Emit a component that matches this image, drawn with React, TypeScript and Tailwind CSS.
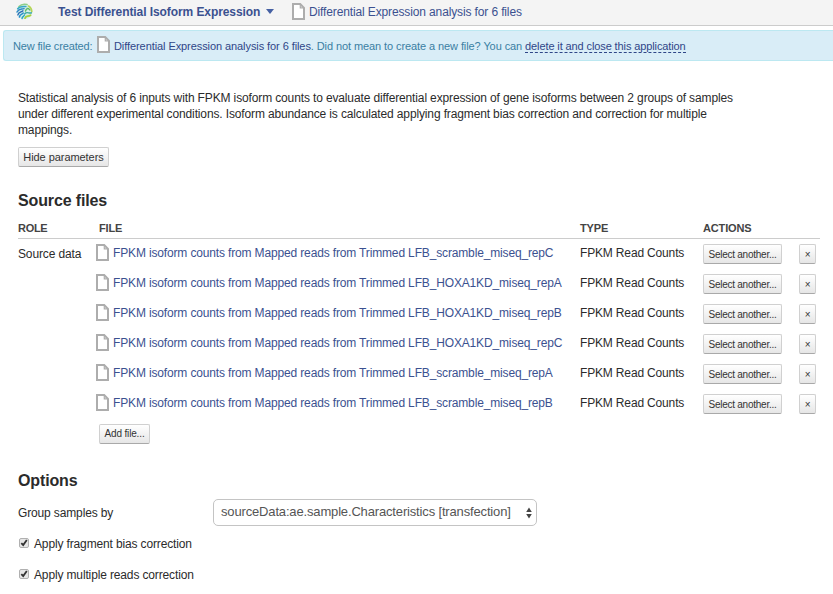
import React from 'react';

const files = [
  'LFB_scramble_miseq_repC',
  'LFB_HOXA1KD_miseq_repA',
  'LFB_HOXA1KD_miseq_repB',
  'LFB_HOXA1KD_miseq_repC',
  'LFB_scramble_miseq_repA',
  'LFB_scramble_miseq_repB',
];

function FileIcon() {
  return (
    <svg width="13" height="17" viewBox="0 0 13 17" className="block shrink-0">
      <path d="M1 1H8.2L12 4.8V16H1Z" fill="#fff" stroke="#adadad" strokeWidth="2" />
      <path d="M8.3 1V4.8H12" fill="none" stroke="#adadad" strokeWidth="1.2" />
    </svg>
  );
}

function Logo() {
  return (
    <svg width="17" height="17" viewBox="0 0 17 17" className="block shrink-0">
      <circle cx="8.5" cy="8.5" r="7.8" fill="#d5eee9" />
      <g fill="none" strokeLinecap="round">
        <path d="M3 3.6C5 1.4 8 .8 11 1.6" stroke="#8fcf8a" strokeWidth="1.6" />
        <path d="M1.6 5.8C4 3 7 3.4 10 3.6" stroke="#35a9c4" strokeWidth="1.4" />
        <path d="M1 9C3 5.5 5 6.5 8 5.6" stroke="#2d86c8" strokeWidth="1.5" />
        <path d="M1.8 12C3 8.5 5 9.5 7 7.8" stroke="#2769b5" strokeWidth="1.3" />
        <path d="M3.4 14C4 11 5.5 12 7.2 10" stroke="#258ecb" strokeWidth="1.6" />
        <path d="M6 15.6C6.2 13.5 7.5 14 8.4 12" stroke="#2aa5bb" strokeWidth="1.4" />
        <path d="M12.5 3C14.5 4 15.6 6 15.8 8.5" stroke="#b6d552" strokeWidth="1.6" />
        <path d="M9.5 8C10.5 4.8 12.5 4.8 13.8 7" stroke="#5dbb63" strokeWidth="1.4" />
        <path d="M8.8 10.8C11 8 13 11 15.5 9.8" stroke="#3aa99f" strokeWidth="1.4" />
        <path d="M9 15.2C10 12 12 14 14.6 12.2" stroke="#a6cf3f" strokeWidth="1.8" />
      </g>
    </svg>
  );
}

function Button({ children, className }: { children: React.ReactNode; className: string }) {
  return (
    <button
      className={`block h-5 shrink-0 whitespace-nowrap rounded-[2px] border border-[#d0d0d0] border-b-[#a9a9a9] bg-gradient-to-b from-white to-[#e6e6e6] text-center text-[#333] ${className}`}
    >
      {children}
    </button>
  );
}

function Check({ label }: { label: string }) {
  return (
    <label className="flex h-[31px] items-center">
      <svg width="10" height="10" viewBox="0 0 10 10" className="mr-[5px] mb-[2px] ml-[1px] block shrink-0">
        <rect x=".5" y=".5" width="9" height="9" rx="1.5" fill="#e6e6e6" stroke="#b0b0b0" />
        <path d="M2.3 5.1L4.2 7L7.8 2" fill="none" stroke="#333" strokeWidth="1.8" />
      </svg>
      <span>{label}</span>
    </label>
  );
}

export default function App() {
  return (
    <div className="h-[594px] w-[833px] overflow-hidden bg-white font-['Liberation_Sans',Arial,sans-serif] text-[12px] leading-4 tracking-[-0.14px] text-[#2b2b2b]">
      <header className="flex h-[26px] items-center border-b border-[#ccc] bg-[#f4f4f4] pb-[2px] pl-4 text-[#3b5190]">
        <Logo />
        <span className="ml-[25px] w-[202px] whitespace-nowrap font-bold tracking-[-0.08px]">Test Differential Isoform Expression</span>
        <span className="ml-[6px] border-x-4 border-t-[5px] border-x-transparent border-t-[#4560a3]" />
        <span className="-mt-px ml-[18px]"><FileIcon /></span>
        <span className="ml-[4px] whitespace-nowrap tracking-[-0.13px]">Differential Expression analysis for 6 files</span>
      </header>

      <div className="mt-1 ml-[3px] flex h-[31px] items-center rounded-l-[3px] border border-r-0 border-[#bce8f1] bg-[#d9edf7] pl-[9px] text-[11px] tracking-[-0.08px] whitespace-nowrap text-[#3a7fa3]">
        <span className="w-[80px] tracking-[-0.15px]">New file created:</span>
        <span className="-mt-[3px] mr-[4px] ml-[4px]"><FileIcon /></span>
        <span className="text-[#2f4688]">Differential Expression analysis for 6 files</span>
        <span className="whitespace-pre tracking-[-0.09px]">. Did not mean to create a new file? You can </span>
        <span className="mt-px border-b border-dashed border-[#2f4688] leading-[12px] tracking-[-0.11px] text-[#2f4688]">delete it and close this application</span>
      </div>

      <main className="pt-[29px] pr-[13px] pl-[18px]">
        <p className="whitespace-nowrap tracking-[-0.135px]">
          Statistical analysis of 6 inputs with FPKM isoform counts to evaluate differential expression of gene isoforms between 2 groups of samples<br />
          under different experimental conditions. Isoform abundance is calculated applying fragment bias correction and correction for multiple<br />
          mappings.
        </p>
        <Button className="mt-[9px] w-[91px] text-[11px] leading-[18px] tracking-[-0.06px]">Hide parameters</Button>

        <h2 className="mt-6 h-5 text-[16px] leading-5 font-bold">Source files</h2>
        <div className="mt-2 flex h-5 border-b border-[#ccc] text-[11px] leading-[18px] font-bold text-[#444]">
          <span className="w-[81px] tracking-[-0.3px]">ROLE</span>
          <span className="w-[481px]">FILE</span>
          <span className="w-[123px] tracking-[-0.1px]">TYPE</span>
          <span>ACTIONS</span>
        </div>
        <div className="flex">
          <div className="w-[78px] pt-[7px]">Source data</div>
          <div>
            {files.map((file) => (
              <div key={file} className="flex h-[30px] items-center">
                <span className="-mt-[3px]"><FileIcon /></span>
                <span className="-mt-[2px] ml-1 w-[467px] whitespace-nowrap tracking-[-0.15px] text-[#3b5190]">
                  FPKM isoform counts from Mapped reads from Trimmed {file}
                </span>
                <span className="-mt-[2px] w-[123px] whitespace-nowrap tracking-[-0.16px]">FPKM Read Counts</span>
                <Button className="w-[79px] text-[10px] leading-[19px] tracking-[-0.25px]">Select another...</Button>
                <Button className="ml-[17px] w-[17px] text-[10px] leading-[19px]">×</Button>
              </div>
            ))}
            <div className="flex h-[30px] items-center pl-[3px]">
              <Button className="w-[51px] text-[10px] leading-[18px] tracking-[-0.15px]">Add file...</Button>
            </div>
          </div>
        </div>

        <h2 className="mt-[22px] h-5 text-[16px] leading-5 font-bold">Options</h2>
        <div className="mt-2 flex h-[27px] items-center">
          <span className="w-[195px]">Group samples by</span>
          <div className="flex h-[27px] w-[324px] items-center justify-between rounded-[5px] border border-[#c4c4c4] bg-white pr-[4px] pl-[7px] text-[13px] tracking-[-0.157px] text-[#555]">
            <span className="-mt-[2px] whitespace-nowrap">sourceData:ae.sample.Characteristics [transfection]</span>
            <svg width="6" height="12" viewBox="0 0 6 12" className="block">
              <path d="M3 0.5L5.8 5H.2ZM3 11.5L5.8 7H.2Z" fill="#444" />
            </svg>
          </div>
        </div>
        <div className="mt-[2px]">
          <Check label="Apply fragment bias correction" />
          <Check label="Apply multiple reads correction" />
        </div>
      </main>
    </div>
  );
}
